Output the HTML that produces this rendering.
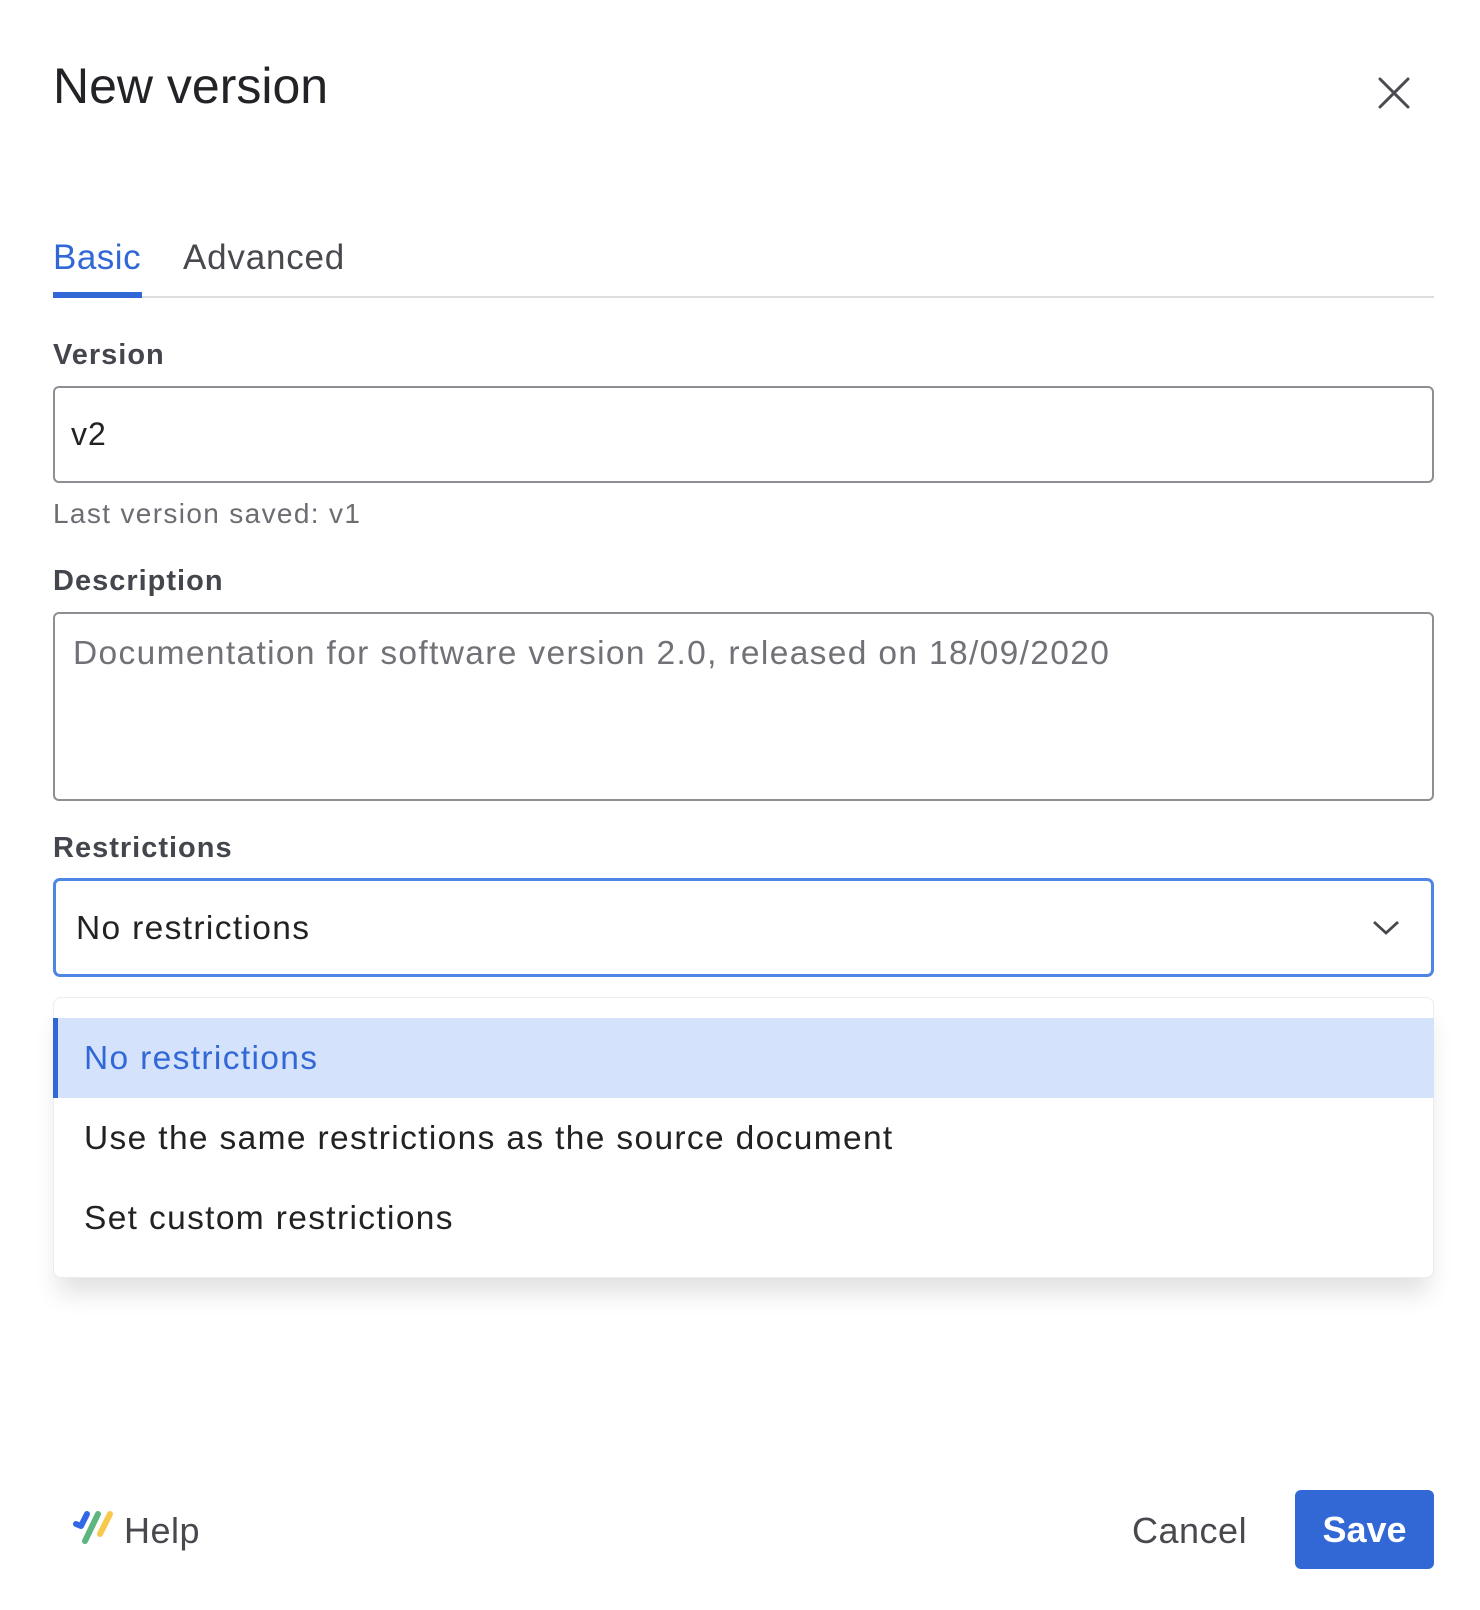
<!DOCTYPE html>
<html><head><meta charset="utf-8"><style>
*{margin:0;padding:0;box-sizing:border-box}
body{width:1480px;height:1610px;background:#fff;font-family:"Liberation Sans",Helvetica,Arial,sans-serif;position:relative;overflow:hidden;color:#222}
.a{position:absolute;white-space:nowrap}
.lbl{font-weight:bold;font-size:29px;color:#44464d;letter-spacing:1px}
.box{position:absolute;left:53px;width:1381px;border:2px solid #8d8f94;border-radius:6px}
.t{letter-spacing:1.35px}
</style></head><body>
<div class="a" style="left:53px;top:57px;font-size:50px;color:#222326;letter-spacing:0px">New version</div>
<svg class="a" style="left:1377px;top:76px" width="34" height="34" viewBox="0 0 34 34"><path d="M3 3L31 31M31 3L3 31" stroke="#4a4b50" stroke-width="3" stroke-linecap="round"/></svg>

<div class="a" style="left:53px;top:238px;font-size:35px;color:#3268d6;letter-spacing:0.5px">Basic</div>
<div class="a" style="left:183px;top:238px;font-size:35px;color:#48494e;letter-spacing:0.8px">Advanced</div>
<div class="a" style="left:53px;top:296px;width:1381px;height:2px;background:#dedede"></div>
<div class="a" style="left:53px;top:292px;width:89px;height:6px;background:#3268d6"></div>

<div class="a lbl" style="left:53px;top:339px">Version</div>
<div class="box" style="top:386px;height:97px"></div>
<div class="a" style="left:71px;top:416px;font-size:32px;color:#222;letter-spacing:1px">v2</div>
<div class="a t" style="left:53px;top:498px;font-size:28px;color:#6b6d72">Last version saved: v1</div>

<div class="a lbl" style="left:53px;top:565px">Description</div>
<div class="box" style="top:612px;height:189px"></div>
<div class="a t" style="left:73px;top:635px;font-size:33.5px;color:#707277">Documentation for software version 2.0, released on 18/09/2020</div>

<div class="a lbl" style="left:53px;top:832px">Restrictions</div>
<div class="box" style="top:878px;height:99px;border:3px solid #4f85e4;border-radius:7px"></div>
<div class="a t" style="left:76px;top:910px;font-size:33.5px;color:#222">No restrictions</div>
<svg class="a" style="left:1372px;top:918px" width="28" height="18" viewBox="0 0 28 18"><path d="M2 4L14 15L26 4" stroke="#46474c" stroke-width="2.8" fill="none"/></svg>

<div class="a" style="left:53px;top:997px;width:1381px;height:281px;background:#fff;border:1px solid #ececec;border-radius:8px;box-shadow:0 20px 25px -5px rgba(0,0,0,0.12)"></div>
<div class="a" style="left:53px;top:1018px;width:1381px;height:80px;background:#d4e2fb;border-left:5px solid #3268d6"></div>
<div class="a t" style="left:84px;top:1040px;font-size:33.5px;color:#3268d6">No restrictions</div>
<div class="a t" style="left:84px;top:1120px;font-size:33.5px;color:#222">Use the same restrictions as the source document</div>
<div class="a t" style="left:84px;top:1200px;font-size:33.5px;color:#222">Set custom restrictions</div>

<svg class="a" style="left:73px;top:1510px" width="42" height="36" viewBox="0 0 42 36">
<path d="M14 4L8 16L3 14" stroke="#3268e6" stroke-width="6" stroke-linecap="round" stroke-linejoin="round" fill="none"/>
<path d="M25 4L12 31" stroke="#5db57f" stroke-width="6" stroke-linecap="round"/>
<path d="M37 4L27 24" stroke="#f6c94b" stroke-width="6" stroke-linecap="round"/>
</svg>
<div class="a" style="left:124px;top:1510px;font-size:36px;color:#48494e;letter-spacing:0.5px">Help</div>
<div class="a" style="left:1132px;top:1510px;font-size:36px;color:#48494e;letter-spacing:0.5px">Cancel</div>
<div class="a" style="left:1295px;top:1490px;width:139px;height:79px;background:#3268d6;border-radius:6px;color:#fff;font-size:36px;font-weight:bold;text-align:center;line-height:79px">Save</div>
</body></html>
